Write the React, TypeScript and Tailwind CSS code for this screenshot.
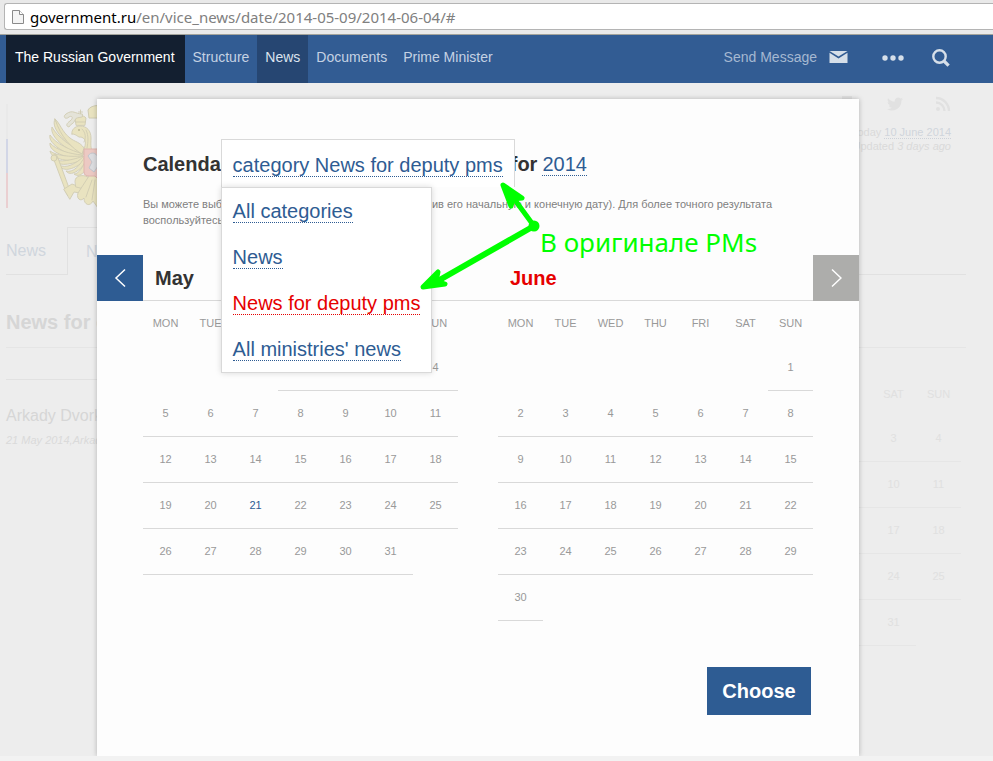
import React from "react";

const WEEKDAYS = ["MON", "TUE", "WED", "THU", "FRI", "SAT", "SUN"];

const CATEGORIES = [
  { label: "All categories", active: false },
  { label: "News", active: false },
  { label: "News for deputy pms", active: true },
  { label: "All ministries' news", active: false },
];

function buildWeeks(offset: number, days: number): (number | null)[][] {
  const weeks: (number | null)[][] = [];
  for (let start = 1 - offset; start <= days; start += 7) {
    weeks.push(
      Array.from({ length: 7 }, (_, i) => {
        const day = start + i;
        return day >= 1 && day <= days ? day : null;
      }),
    );
  }
  return weeks;
}

type MonthProps = {
  label: string;
  offset: number;
  days: number;
  selected?: number;
  faded?: boolean;
};

function MonthTable({ label, offset, days, selected, faded }: MonthProps) {
  const text = faded ? "text-[#e0e0e0]" : "text-[#999999]";
  const line = faded ? "border-[#e6e6e6]" : "border-[#d9d9d9]";
  return (
    <table
      aria-label={label}
      className={`w-[315px] table-fixed border-separate border-spacing-0 text-center text-[11px] ${text}`}
    >
      <thead>
        <tr className="h-11">
          {WEEKDAYS.map((d) => (
            <th key={d} scope="col" className="p-0 font-normal">
              {d}
            </th>
          ))}
        </tr>
      </thead>
      <tbody>
        {buildWeeks(offset, days).map((week, w) => (
          <tr key={w} className="h-[46px]">
            {week.map((day, i) => (
              <td
                key={i}
                className={`p-0 ${day ? `border-b ${line}` : ""} ${
                  day && day === selected ? "text-[#2e5c93]" : ""
                }`}
              >
                {day}
              </td>
            ))}
          </tr>
        ))}
      </tbody>
    </table>
  );
}

function AddressBar() {
  return (
    <div className="h-[35px] border-b border-[#a3a39b] bg-[#e9e9e9] pt-[3px] pl-1">
      <div className="flex h-[27px] items-center rounded-l-[3px] border border-r-0 border-[#b4b4b4] bg-white pl-[7px]">
        <svg width="12" height="16" viewBox="0 0 12 16" className="mr-1.5 shrink-0" aria-hidden="true">
          <path d="M.5 1.5H7.5L11.5 5.5V14.5H.5Z" fill="#f4f4f4" stroke="#8a8a8a" />
          <path d="M7.5 1.5V5.5H11.5" fill="#fff" stroke="#8a8a8a" />
        </svg>
        <div className="font-['Noto_Sans','Open_Sans',sans-serif] text-[15px] leading-5 text-[#808080]">
          <span className="text-black">government.ru</span>
          /en/vice_news/date/2014-05-09/2014-06-04/#
        </div>
      </div>
    </div>
  );
}

function SiteHeader() {
  return (
    <header className="flex h-12 bg-[#325c93] pl-1.5 text-sm leading-11 text-[#c5d2e3]">
      <nav className="flex whitespace-nowrap">
        <a href="#" className="bg-[#131f30] pr-2.5 pl-[9px] text-white">
          The Russian Government
        </a>
        <a href="#" className="px-2">Structure</a>
        <a href="#" className="bg-[#264672] px-2 text-[#dbe3ee]">News</a>
        <a href="#" className="px-2">Documents</a>
        <a href="#" className="px-2">Prime Minister</a>
      </nav>
      <div className="ml-auto flex h-11 items-center pr-[43px]">
        <a href="#" className="flex items-center gap-3 text-[#a5b8d1]">
          Send Message
          <svg width="19" height="12" viewBox="0 0 19 12" fill="#d6dfe9" aria-hidden="true">
            <path d="M.5 0H18.500L9.500 5.500Z" />
            <path d="M.5 1.800L9.500 7.500L18.500 1.800V12H.5Z" />
          </svg>
        </a>
        <button type="button" aria-label="More" className="ml-[34px] pt-0.5">
          <svg width="22" height="6" viewBox="0 0 22 6" fill="#d6dfe9">
            <circle cx="3" cy="3" r="2.700" />
            <circle cx="11" cy="3" r="2.700" />
            <circle cx="19" cy="3" r="2.700" />
          </svg>
        </button>
        <button type="button" aria-label="Search" className="ml-7 pt-0.5">
          <svg width="18" height="18" viewBox="0 0 18 18" fill="none" stroke="#d6dfe9">
            <circle cx="7.500" cy="7.500" r="6.200" strokeWidth="2.400" />
            <path d="M12 12L16.600 16.600" strokeWidth="3.200" />
          </svg>
        </button>
      </div>
    </header>
  );
}

function EmblemHalf() {
  return (
    <g fill="#e9e3c0" stroke="#d0ccb2" strokeWidth=".9" strokeLinejoin="round" strokeLinecap="round">
      {/* wing feathers, fanned from the shoulder */}
      <path d="M38 57C26 49 12 36 7 23C3 31 13 44 34 58Z" />
      <path d="M36 57C24 51 10 42 4 31C2 39 12 50 33 60Z" />
      <path d="M35 58C22 54 8 48 2 39C0 46 12 56 32 62Z" />
      <path d="M34 59C22 58 8 54 2 47C1 54 12 61 32 63Z" />
      <path d="M34 60C22 61 9 60 2 55C3 61 13 66 32 64Z" />
      <path d="M36 60C24 64 12 67 5 63C8 70 20 70 34 64Z" />
      <path d="M36 60C28 68 18 73 11 69C15 77 27 73 36 65Z" />
      <path d="M37 60C32 70 25 77 18 75C22 81 33 75 39 64Z" />
      <path d="M38 62C36 70 31 78 26 78C31 82 38 77 41 66Z" />
      {/* wing bone */}
      <path d="M7 23C12 27 14 36 22 42C27 46 32 46 36 52L34 58C24 52 13 42 7 23Z" />
      {/* neck and head */}
      <path d="M24 38C23 34 27 30 32 30C39 30 43 35 43 42C43 48 42 51 45 57H35C37 50 40 43 33 41C30 42 29 38 24 38Z" />
      <path d="M34 33C38 37 38 42 36 46M38 34C41 40 40 46 39 52" fill="none" />
      <circle cx="31" cy="34" r="1" fill="#bdb896" stroke="none" />
      {/* side crown */}
      <path d="M28 29L27 22C29 19 36 19 38 22L37 29Z" />
      <path d="M32.500 20V14M30.500 16H34.500M28 26H37" fill="none" />
      {/* ribbon */}
      <path d="M34 18C27 18 25 13 18 18C14 21 18 24 21 21C24 19 26 22 22 25C19 27 17 30 21 31C22 28 26 28 27 24C28 21 31 22 34 21Z" fill="#e4e3d8" />
      {/* sceptre and claw */}
      <path d="M4 60L8 58L10 62L21 92L23 98L20 100L18 96L6 64Z" />
      <circle cx="6" cy="62" r="3" />
      <path d="M16 93L24 88L32 91L38 89L40 94L32 97L26 96L22 103Z" />
      {/* leg and tail */}
      <path d="M27 85C27 80 34 78 40 81L44 88L36 93L28 91Z" />
      <path d="M41 80L30 97C28 103 33 106 36 102C36 109 42 111 45 105L50 112V80Z" />
      <path d="M44 84L38 101M47 84L44 104" fill="none" />
    </g>
  );
}

function Emblem() {
  return (
    <svg width="100" height="112" viewBox="0 0 100 112" className="ml-10" role="img" aria-label="Coat of arms">
      <EmblemHalf />
      <g transform="translate(100 0) scale(-1 1)">
        <EmblemHalf />
      </g>
      <path d="M41 22L40 14C43 8 57 8 60 14L59 22Z" fill="#e9e3c0" stroke="#d0ccb2" />
      <path d="M36 53H64V76C64 79 62 80 59 80H53L50 83L47 80H41C38 80 36 79 36 76Z" fill="#ecc9c3" stroke="#dfb5ae" />
      <path d="M40 60C43 55 48 57 50 61L57 58L60 66L55 75L50 70L46 76L41 72L44 66Z" fill="#dcdde0" stroke="#c2c5cc" />
    </svg>
  );
}

/* The news listing that lies dimmed behind the dialog. */
function NewsPage() {
  return (
    <div className="col-start-1 row-start-1 w-full max-w-[966px] pl-1.5 text-[#d6d6d6]" aria-hidden="true">
      <div className="flex h-36 items-start pt-[13px]">
        <div className="mt-2 flex h-[104px] w-0.5 flex-col">
          <span className="flex-1 bg-[#e9e9e9]" />
          <span className="flex-1 bg-[#d2d6e6]" />
          <span className="flex-1 bg-[#eacfd1]" />
        </div>
        <Emblem />
        <div className="mr-[15px] ml-auto text-right text-[11px] leading-[14px] text-[#dadada]">
          <div className="mb-[13px] flex justify-end gap-8 text-[#e1e1e1]">
            <svg width="16" height="16" viewBox="0 0 16 16" fill="currentColor">
              <path d="M3 0H13V16H3Z" />
            </svg>
            <svg width="16" height="16" viewBox="0 0 24 24" fill="currentColor">
              <path d="M24 4.600a10 10 0 0 1-2.800.8 5 5 0 0 0 2.100-2.700 10 10 0 0 1-3.100 1.200 4.900 4.900 0 0 0-8.400 4.500A14 14 0 0 1 1.700 3.200a4.900 4.900 0 0 0 1.500 6.500 5 5 0 0 1-2.200-.6 4.900 4.900 0 0 0 3.900 4.900 5 5 0 0 1-2.200.1 4.900 4.900 0 0 0 4.600 3.400A10 10 0 0 1 0 19.500 14 14 0 0 0 21.500 7a10 10 0 0 0 2.500-2.400Z" />
            </svg>
            <svg width="16" height="16" viewBox="0 0 16 16" fill="none" stroke="currentColor" strokeWidth="2.400">
              <circle cx="3" cy="13" r="2" fill="currentColor" stroke="none" />
              <path d="M1 6.500A8.500 8.500 0 0 1 9.500 15M1 2A13 13 0 0 1 14 15" />
            </svg>
          </div>
          <div>
            Today <span className="border-b border-dotted border-[#cdd2d9] text-[#d0d5dc]">10 June 2014</span>
          </div>
          <div>
            Updated <em>3 days ago</em>
          </div>
        </div>
      </div>

      <div className="flex h-12 text-base leading-12 text-[#d0d6dd]">
        <span className="w-[61px] border-b border-[#e1e1e1]">News</span>
        <span className="w-40 border-x border-t border-[#e1e1e1] pl-[18px]">News for</span>
        <span className="flex-1 border-b border-[#e1e1e1]" />
      </div>
      <h1 className="h-[73px] border-b border-[#e5e5e5] pt-[33px] text-xl leading-7 font-bold">News for deputy pms</h1>

      <div className="flex items-start justify-between pr-[5px]">
        <div className="mt-[31px] w-[600px] border-t border-[#e1e1e1] pt-6">
          <div className="text-base leading-6">Arkady Dvorkovich</div>
          <div className="text-[11px] leading-6 text-[#dadada] italic">21 May 2014,Arkady Dvorkovich</div>
        </div>
        <div className="mt-6">
          <MonthTable label="News calendar" offset={3} days={31} faded />
        </div>
      </div>
    </div>
  );
}

function CategoryPicker() {
  return (
    <div className="relative z-10 -ml-2 h-12 border border-b-0 border-[#d9d9d9] bg-white px-[11px] text-[#2e5c93]">
      <button type="button" aria-expanded="true" className="leading-12 font-normal whitespace-nowrap">
        <span className="border-b border-dotted border-[#2e5c93]">category News for deputy pms</span>
      </button>
      <ul className="absolute top-full -left-px w-[211px] border border-[#d9d9d9] bg-white pl-[11px] shadow-[0_0_6px_rgba(0,0,0,0.15)]">
        {CATEGORIES.map(({ label, active }) => (
          <li key={label} className="h-[46px] leading-[46px] font-normal whitespace-nowrap">
            <a
              href="#"
              className={`border-b border-dotted ${
                active ? "border-[#e60000] text-[#e60000]" : "border-[#2e5c93] text-[#2e5c93]"
              }`}
            >
              {label}
            </a>
          </li>
        ))}
      </ul>
    </div>
  );
}

function CalendarDialog() {
  return (
    <section
      role="dialog"
      aria-label="Calendar"
      className="z-10 col-start-1 row-start-1 mt-4 ml-[97px] w-full max-w-[762px] bg-[#fdfdfd] pt-10 pb-[41px] text-[#333333] shadow-[0_0_5px_rgba(0,0,0,0.25)]"
    >
      <div className="flex h-12 pl-[46px] text-xl leading-[50px]">
        <h2 className="font-bold">Calendar</h2>
        <CategoryPicker />
        <span className="-ml-1 font-bold">for</span>
        <a href="#" className="ml-[5px] text-[#2e5c93]">
          <span className="border-b border-dotted border-[#2e5c93]">2014</span>
        </a>
      </div>
      <p className="mx-[46px] mt-[9px] h-[59px] text-[11px] leading-4 text-[#808080]">
        Вы можете выбрать интересующий вас период (обозначив его начальную и конечную дату). Для более точного результата
        <br />
        воспользуйтесь поиском.
      </p>
      <div className="flex h-[46px] text-xl leading-[46px] font-bold">
        <button type="button" aria-label="Previous month" className="flex w-[46px] items-center justify-center bg-[#2e5c93]">
          <svg width="12" height="20" viewBox="0 0 12 20" fill="none" stroke="#fff" strokeWidth="1.500">
            <path d="M11 1.500L2 10L11 18.500" />
          </svg>
        </button>
        <div className="grid flex-1 grid-cols-[355px_1fr] border-b border-[#d9d9d9] pl-3">
          <h3>May</h3>
          <h3 className="text-[#e60000]">June</h3>
        </div>
        <button type="button" aria-label="Next month" className="flex w-[46px] items-center justify-center bg-[#adadab]">
          <svg width="12" height="20" viewBox="0 0 12 20" fill="none" stroke="#fff" strokeWidth="1.500">
            <path d="M2 1.500L11 10L2 18.500" />
          </svg>
        </button>
      </div>
      <div className="mx-[46px] flex items-start justify-between">
        <MonthTable label="May 2014" offset={3} days={31} selected={21} />
        <MonthTable label="June 2014" offset={6} days={30} />
      </div>
      <div className="mt-[46px] flex justify-end pr-12">
        <button type="button" className="h-12 w-[104px] bg-[#2e5c93] text-xl font-bold text-white">
          Choose
        </button>
      </div>
    </section>
  );
}

/* Reviewer's mark: two green arrows and a remark, drawn over the dialog. */
function Annotation() {
  return (
    <div className="pointer-events-none absolute top-[170px] left-[415px] z-20">
      <svg width="130" height="130" viewBox="415 170 130 130" fill="#00ff00" stroke="#00ff00" strokeLinecap="round" strokeLinejoin="round" aria-hidden="true">
        <circle cx="534" cy="226" r="5.500" stroke="none" />
        <path d="M534 226L512 196" strokeWidth="5" />
        <path d="M534 226L436 282" strokeWidth="6" />
        <path d="M503 185L522 198L513 199L511 206Z" strokeWidth="5" />
        <path d="M423 287L438 272L436 281L445 284Z" strokeWidth="5" />
      </svg>
      <span className="absolute top-[53px] left-[125px] font-['Noto_Sans','Open_Sans',sans-serif] text-[26px] leading-[38px] whitespace-nowrap text-[#00ff00]">
        В оригинале PMs
      </span>
    </div>
  );
}

export default function App() {
  return (
    <div className="relative flex min-h-screen flex-col overflow-hidden bg-[#f2f2f2] font-['Liberation_Sans',Arial,sans-serif]">
      <AddressBar />
      <SiteHeader />
      <main className="mb-[5px] grid flex-1 overflow-hidden bg-[#ededed]">
        <NewsPage />
        <CalendarDialog />
      </main>
      <Annotation />
    </div>
  );
}
